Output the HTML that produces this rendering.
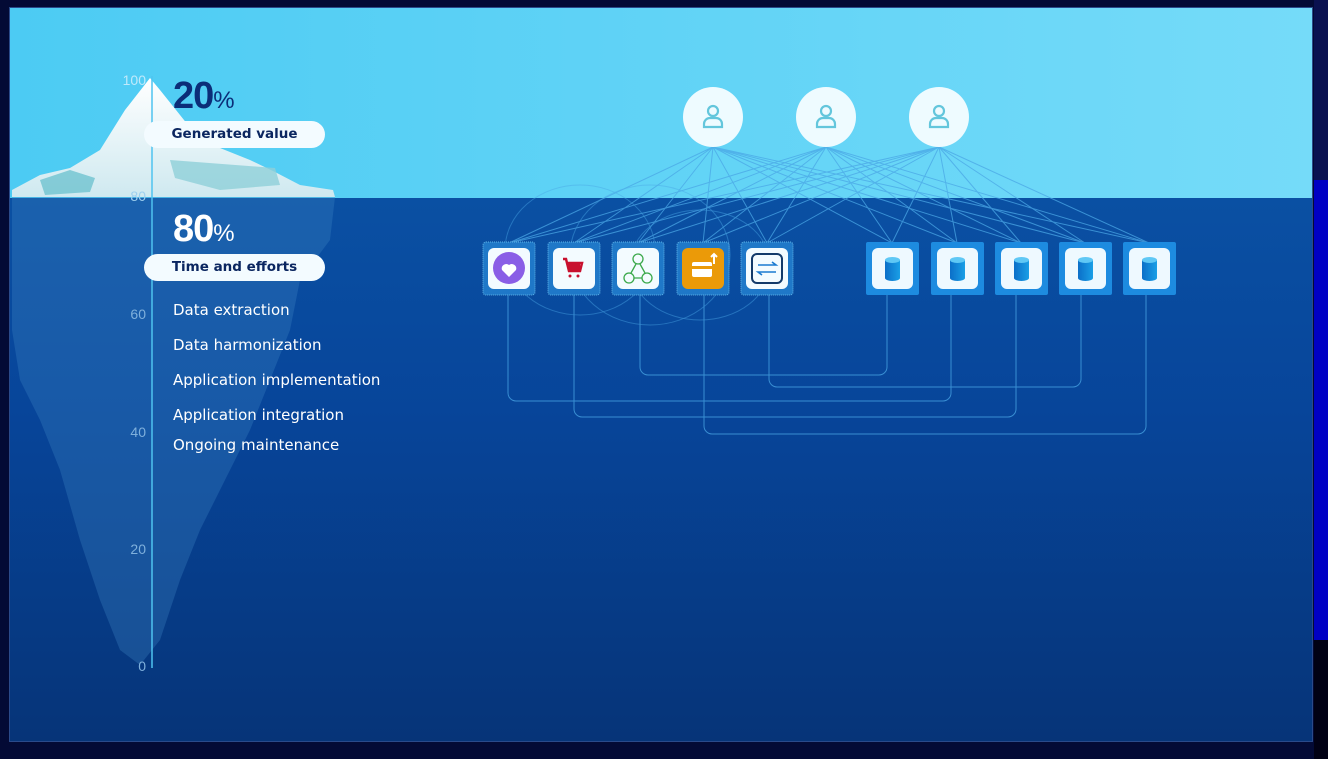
<!DOCTYPE html>
<html><head><meta charset="utf-8"><style>
html,body{margin:0;padding:0;background:#030a35;}
body{width:1328px;height:759px;overflow:hidden;position:relative;font-family:"Liberation Sans",sans-serif;}
.t{position:absolute;color:#fff;font-size:15px;font-family:"DejaVu Sans",sans-serif}
.ax{position:absolute;color:#7fb0dc;font-size:14px;text-align:right;width:30px}
.pill{position:absolute;left:144px;width:181px;height:27px;border-radius:14px;background:#f3fbff;color:#0b2660;font-size:13.5px;font-weight:bold;text-align:center;line-height:27px;font-family:"DejaVu Sans",sans-serif}
</style></head><body>
<div style="position:absolute;left:1314px;top:0;width:14px;height:180px;background:#0a1150"></div>
<div style="position:absolute;left:1314px;top:180px;width:14px;height:460px;background:#0000c4"></div>
<div style="position:absolute;left:1314px;top:640px;width:14px;height:119px;background:#010114"></div>
<div style="position:absolute;left:9px;top:7px;width:1304px;height:735px;border:1px solid #2a4a8a;box-sizing:border-box;overflow:hidden;background:linear-gradient(#0a50a3 190px,#07459a 400px,#063478 735px)">
<div style="position:absolute;left:0;top:0;width:100%;height:190px;background:linear-gradient(90deg,#4ccbf3,#75dbf9)"></div>
</div>
<svg width="1328" height="759" style="position:absolute;left:0;top:0">
<defs>
<linearGradient id="ice" x1="0" y1="0" x2="0" y2="1"><stop offset="0" stop-color="#ffffff"/><stop offset="1" stop-color="#cfe9f0"/></linearGradient>
<linearGradient id="db" x1="0" y1="0" x2="1" y2="0"><stop offset="0" stop-color="#0b6fc8"/><stop offset="1" stop-color="#1a9fe6"/></linearGradient>
</defs>
<path d="M12 197 L335 197 L330 240 L300 280 L290 330 L270 380 L250 430 L230 470 L200 530 L180 580 L160 640 L140 665 L120 650 L100 600 L80 540 L60 470 L40 420 L20 380 L12 330 Z" fill="#3f86c4" opacity=".32"/>
<path d="M12 190 L40 175 L70 168 L100 150 L125 110 L150 78 L160 90 L200 140 L250 160 L275 172 L300 185 L333 190 L335 197 L12 197 Z" fill="url(#ice)"/>
<path d="M40 180 L70 170 L95 178 L90 192 L45 195 Z" fill="#6fc3cf" opacity=".8"/>
<path d="M170 160 L275 168 L280 185 L220 190 L175 178 Z" fill="#8fd0d8" opacity=".8"/>
<line x1="152" y1="76" x2="152" y2="668" stroke="#4fc3f0" stroke-width="1.5"/>
<g stroke="#4aa7e6" stroke-width="1" fill="none" opacity=".75">
<path d="M713 147L509 243M713 147L574 243M713 147L638 243M713 147L703 243M713 147L767 243M713 147L892 243M713 147L957 243M713 147L1021 243M713 147L1085 243M713 147L1149 243"/>
<path d="M826 147L509 243M826 147L574 243M826 147L638 243M826 147L703 243M826 147L767 243M826 147L892 243M826 147L957 243M826 147L1021 243M826 147L1085 243M826 147L1149 243"/>
<path d="M939 147L509 243M939 147L574 243M939 147L638 243M939 147L703 243M939 147L767 243M939 147L892 243M939 147L957 243M939 147L1021 243M939 147L1085 243M939 147L1149 243"/>
<ellipse cx="580" cy="250" rx="75" ry="65" opacity=".6"/><ellipse cx="650" cy="255" rx="80" ry="70" opacity=".6"/><ellipse cx="700" cy="265" rx="70" ry="55" opacity=".6"/>
<path d="M508 295V393a8 8 0 0 0 8 8H943a8 8 0 0 0 8-8V295"/>
<path d="M574 295V409a8 8 0 0 0 8 8H1008a8 8 0 0 0 8-8V295"/>
<path d="M640 295V367a8 8 0 0 0 8 8H879a8 8 0 0 0 8-8V295"/>
<path d="M704 295V426a8 8 0 0 0 8 8H1138a8 8 0 0 0 8-8V295"/>
<path d="M769 295V379a8 8 0 0 0 8 8H1073a8 8 0 0 0 8-8V295"/>
</g>
<g>
<circle cx="713" cy="117" r="30" fill="#eefbff"/><circle cx="826" cy="117" r="30" fill="#eefbff"/><circle cx="939" cy="117" r="30" fill="#eefbff"/>
<g fill="none" stroke="#63c6dc" stroke-width="2.2">
<circle cx="713" cy="111" r="5"/><path d="M704 127v-3a6 6 0 0 1 6-6h6a6 6 0 0 1 6 6v3z"/>
<circle cx="826" cy="111" r="5"/><path d="M817 127v-3a6 6 0 0 1 6-6h6a6 6 0 0 1 6 6v3z"/>
<circle cx="939" cy="111" r="5"/><path d="M930 127v-3a6 6 0 0 1 6-6h6a6 6 0 0 1 6 6v3z"/>
</g></g>
<g stroke="#5fb4e8" stroke-dasharray="1 1" fill="#1f78c8">
<rect x="483" y="242" width="52" height="53" rx="3"/><rect x="548" y="242" width="52" height="53" rx="3"/><rect x="612" y="242" width="52" height="53" rx="3"/><rect x="677" y="242" width="52" height="53" rx="3"/><rect x="741" y="242" width="52" height="53" rx="3"/>
</g>
<g fill="#f3fbff"><rect x="488" y="248" width="42" height="41" rx="6"/><rect x="553" y="248" width="42" height="41" rx="6"/><rect x="617" y="248" width="42" height="41" rx="6"/><rect x="746" y="248" width="42" height="41" rx="6"/></g>
<rect x="682" y="248" width="42" height="41" rx="6" fill="#eb9a08"/>
<circle cx="509" cy="268" r="16" fill="#8a5ee6"/>
<path d="M509 277l-7-7a4.5 4.5 0 0 1 7-5a4.5 4.5 0 0 1 7 5z" fill="#fff"/>
<path d="M563 259h3l3 12h11l2-8h-14" fill="none" stroke="#c8102e" stroke-width="2.5"/><rect x="568" y="263" width="12" height="8" fill="#c8102e"/><circle cx="570" cy="276" r="1.5" fill="#c8102e"/><circle cx="578" cy="276" r="1.5" fill="#c8102e"/>
<g fill="none" stroke="#3aa84a" stroke-width="1.3"><circle cx="638" cy="259" r="5"/><circle cx="629" cy="278" r="5"/><circle cx="647" cy="278" r="5"/><path d="M636 264l-5 9M640 264l5 9M634 278h8"/></g>
<rect x="692" y="262" width="20" height="15" rx="2" fill="#fff"/><rect x="692" y="266" width="20" height="3" fill="#eb9a08"/><path d="M714 264v-10m-3 3l3-3 3 3" stroke="#fff" stroke-width="2" fill="none"/>
<rect x="752" y="254" width="30" height="29" rx="5" fill="none" stroke="#133a6a" stroke-width="2"/><path d="M758 265h18l-4-3M776 272h-18l4 3" fill="none" stroke="#1a7ad0" stroke-width="1.6"/>
<g fill="#1d8be0">
<rect x="866" y="242" width="53" height="53" rx="2"/><rect x="931" y="242" width="53" height="53" rx="2"/><rect x="995" y="242" width="53" height="53" rx="2"/><rect x="1059" y="242" width="53" height="53" rx="2"/><rect x="1123" y="242" width="53" height="53" rx="2"/></g>
<g fill="#eef9ff"><rect x="872" y="248" width="41" height="41" rx="6"/><rect x="937" y="248" width="41" height="41" rx="6"/><rect x="1001" y="248" width="41" height="41" rx="6"/><rect x="1065" y="248" width="41" height="41" rx="6"/><rect x="1129" y="248" width="41" height="41" rx="6"/></g>
<g>
<path d="M885 260v18a7.5 3 0 0 0 15 0v-18z" fill="url(#db)"/><ellipse cx="892.5" cy="260" rx="7.5" ry="3" fill="#5fc8f5"/>
<path d="M950 260v18a7.5 3 0 0 0 15 0v-18z" fill="url(#db)"/><ellipse cx="957.5" cy="260" rx="7.5" ry="3" fill="#5fc8f5"/>
<path d="M1014 260v18a7.5 3 0 0 0 15 0v-18z" fill="url(#db)"/><ellipse cx="1021.5" cy="260" rx="7.5" ry="3" fill="#5fc8f5"/>
<path d="M1078 260v18a7.5 3 0 0 0 15 0v-18z" fill="url(#db)"/><ellipse cx="1085.5" cy="260" rx="7.5" ry="3" fill="#5fc8f5"/>
<path d="M1142 260v18a7.5 3 0 0 0 15 0v-18z" fill="url(#db)"/><ellipse cx="1149.5" cy="260" rx="7.5" ry="3" fill="#5fc8f5"/>
</g>
</svg>
<div class="ax" style="left:116px;top:72px;color:#bfe9fb">100</div>
<div class="ax" style="left:116px;top:188px;color:#9fd0ef">80</div>
<div class="ax" style="left:116px;top:306px">60</div>
<div class="ax" style="left:116px;top:424px">40</div>
<div class="ax" style="left:116px;top:541px">20</div>
<div class="ax" style="left:116px;top:658px">0</div>
<div style="position:absolute;left:173px;top:75px;color:#0b2d78;font-size:38px;font-weight:bold;letter-spacing:-1px">20<span style="font-size:24px;font-weight:normal">%</span></div>
<div class="pill" style="top:121px">Generated value</div>
<div style="position:absolute;left:173px;top:208px;color:#fff;font-size:38px;font-weight:bold;letter-spacing:-1px">80<span style="font-size:24px;font-weight:normal">%</span></div>
<div class="pill" style="top:254px">Time and efforts</div>
<div class="t" style="left:173px;top:301px">Data extraction</div>
<div class="t" style="left:173px;top:336px">Data harmonization</div>
<div class="t" style="left:173px;top:371px">Application implementation</div>
<div class="t" style="left:173px;top:406px">Application integration</div>
<div class="t" style="left:173px;top:436px">Ongoing maintenance</div>
</body></html>
